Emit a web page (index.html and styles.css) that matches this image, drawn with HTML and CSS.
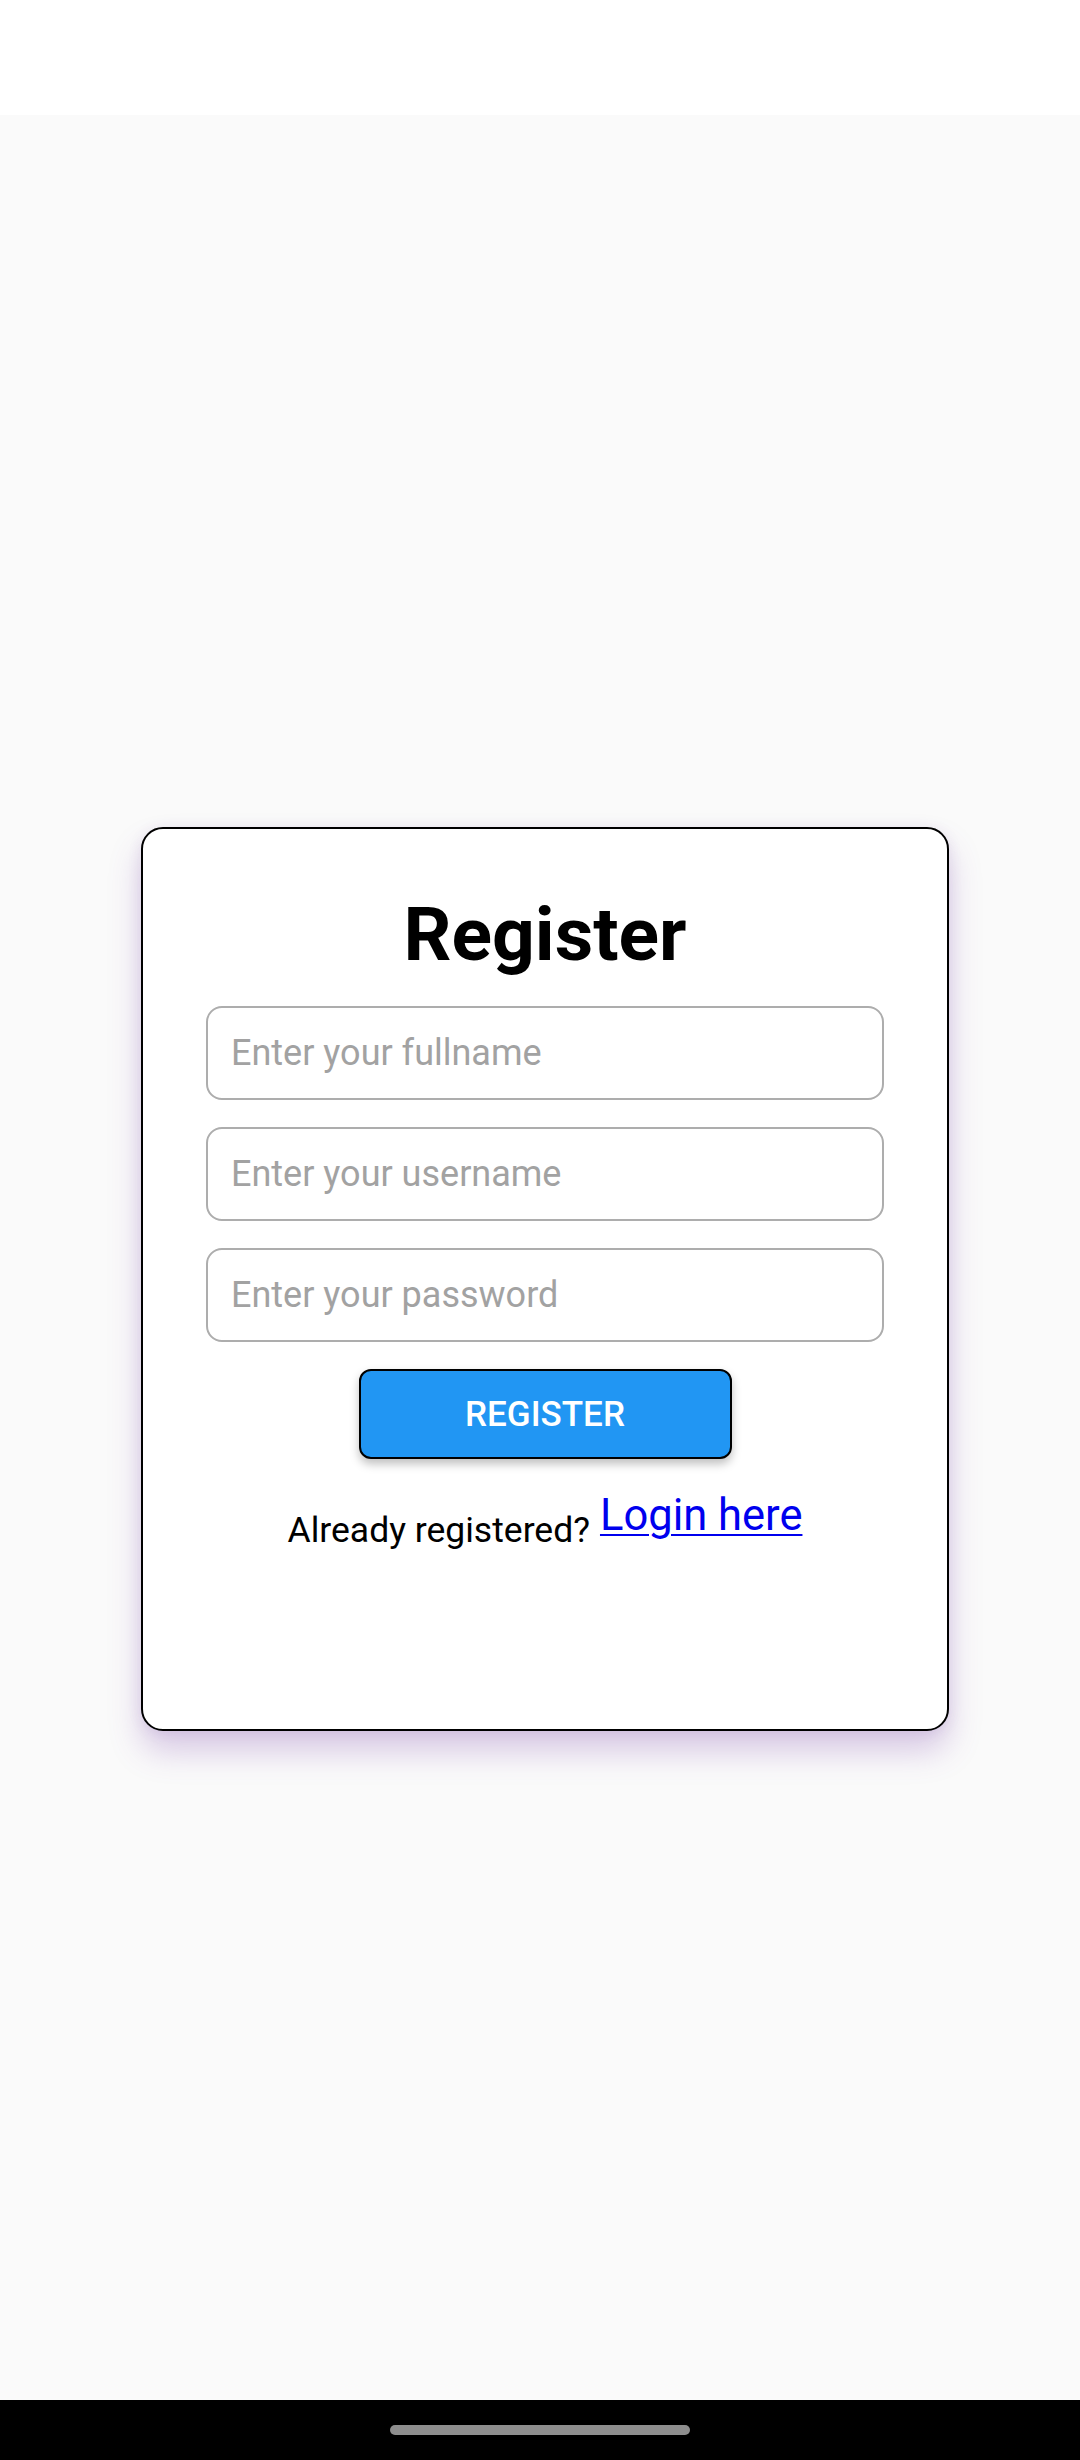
FILE: index.html
```html
<!DOCTYPE html>
<html lang="en">
<head>
<meta charset="utf-8">
<title>Register</title>
<link rel="stylesheet" href="styles.css">
</head>
<body>
<div class="screen">
  <div class="status-bar"></div>
  <main class="content">
    <form class="card">
      <h1 class="title">Register</h1>
      <input class="field" type="text" placeholder="Enter your fullname">
      <input class="field" type="text" placeholder="Enter your username">
      <input class="field" type="password" placeholder="Enter your password">
      <button class="btn" type="button">REGISTER</button>
      <div class="footer-line">
        <span class="already">Already registered?</span>
        <a class="login-link" href="#">Login here</a>
      </div>
    </form>
  </main>
  <div class="nav-bar"><div class="nav-pill"></div></div>
</div>
</body>
</html>
```
FILE: styles.css
```css
* { box-sizing: border-box; }
html, body {
  margin: 0;
  padding: 0;
  width: 1080px;
  height: 2460px;
  font-family: Roboto, "Noto Sans", "Liberation Sans", sans-serif;
}
.screen {
  display: flex;
  flex-direction: column;
  height: 2460px;
  background: #fafafa;
}
.status-bar {
  height: 115px;
  background: #ffffff;
  flex: none;
}
.content {
  flex: 1;
  display: flex;
  flex-direction: column;
  align-items: center;
  padding-top: 712px;
  padding-left: 10px;
}
.card {
  width: 808px;
  height: 904px;
  background: #ffffff;
  border: 2px solid #000000;
  border-radius: 22px;
  box-shadow: 0 20px 32px rgba(120, 60, 170, 0.26), 0 2px 14px rgba(90, 50, 140, 0.10);
  display: flex;
  flex-direction: column;
  align-items: center;
  padding: 62px 63px 0;
}
.title {
  margin: 0 0 28px;
  font-size: 75px;
  font-weight: 700;
  line-height: 87px;
  color: #000000;
}
.field {
  width: 678px;
  height: 94px;
  flex: none;
  border: 2px solid #adadad;
  border-radius: 16px;
  padding: 0 0 0 23px;
  margin: 0 0 27px;
  font-family: Roboto, "Noto Sans", "Liberation Sans", sans-serif;
  font-size: 36px;
  color: #222;
  background: #ffffff;
  outline: none;
}
.field::placeholder {
  color: #a2a2a2;
}
.btn {
  width: 373px;
  height: 90px;
  flex: none;
  background: #2196f3;
  border: 2px solid #000000;
  border-radius: 12px;
  box-shadow: 0 5px 10px rgba(0, 0, 0, 0.25);
  color: #ffffff;
  font-family: Roboto, "Noto Sans", "Liberation Sans", sans-serif;
  font-size: 35px;
  font-weight: 500;
  letter-spacing: 0;
  padding: 0;
  margin: 0 0 32px;
}
.footer-line {
  display: flex;
  align-items: flex-start;
  gap: 10px;
}
.already {
  margin-top: 18px;
  font-size: 35.5px;
  line-height: 42px;
  color: #000000;
}
.login-link {
  font-size: 43.5px;
  line-height: 50px;
  color: #0000ee;
  text-decoration: underline;
  text-underline-offset: 4px;
  text-decoration-thickness: 2px;
}
.nav-bar {
  height: 60px;
  flex: none;
  background: #000000;
  display: flex;
  justify-content: center;
  padding-top: 25px;
}
.nav-pill {
  width: 300px;
  height: 10px;
  border-radius: 5px;
  background: #8e8e8e;
}
```
